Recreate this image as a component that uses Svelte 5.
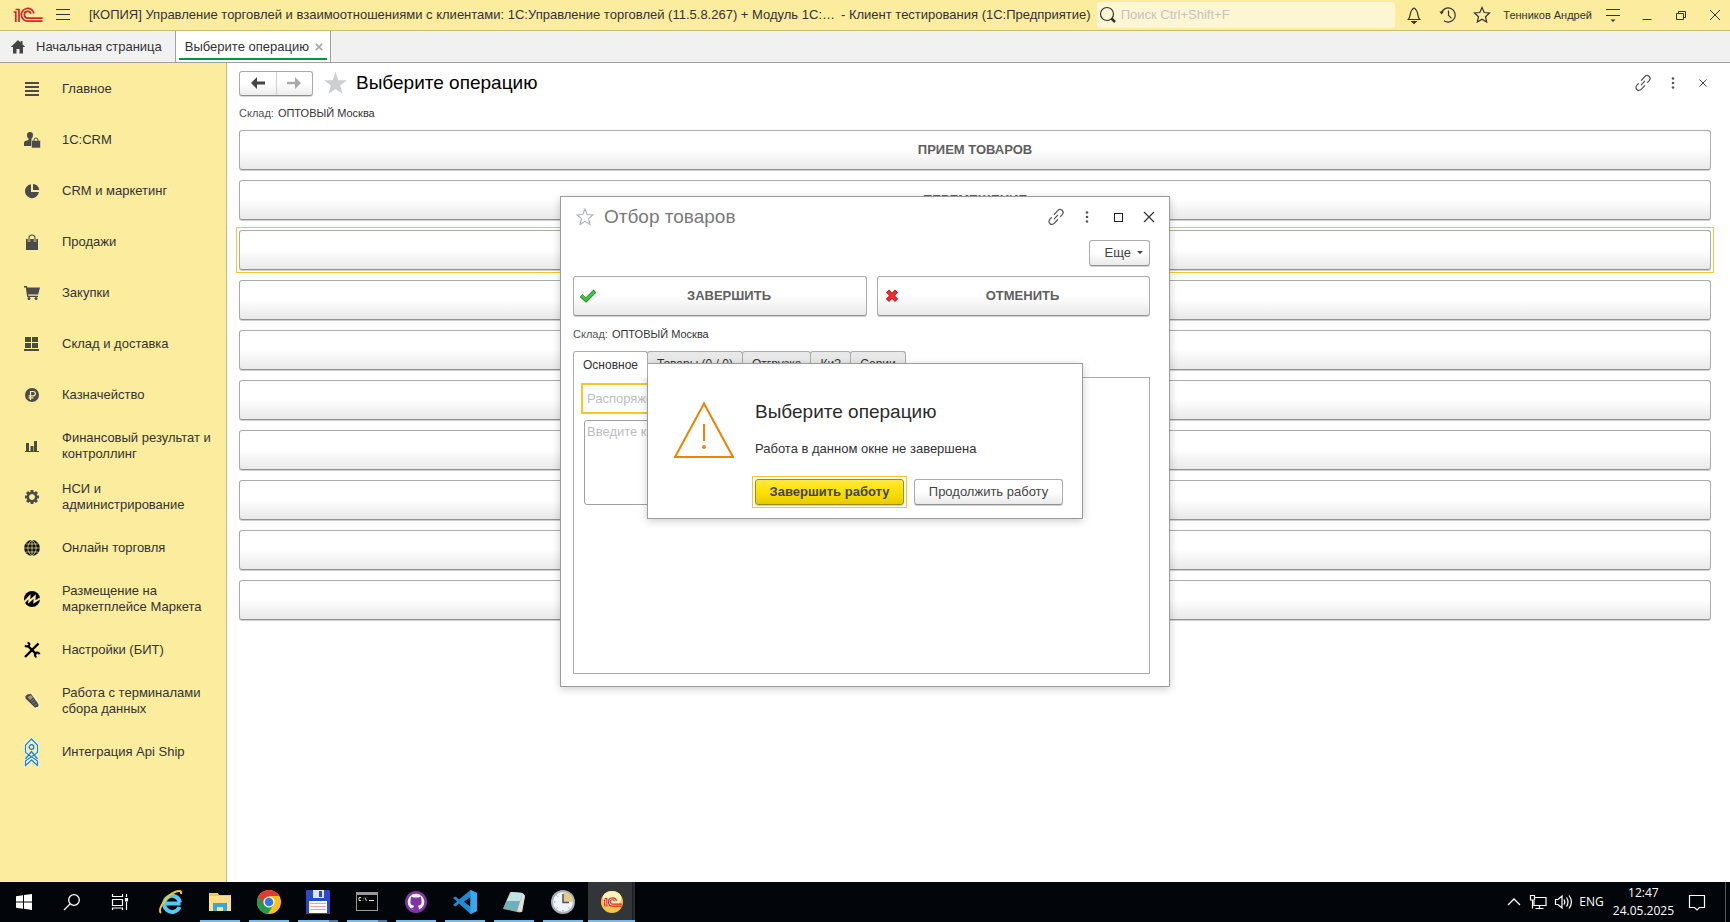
<script>
  const sections = [
    { icon: 'main', label: 'Главное' },
    { icon: 'crm', label: '1С:CRM' },
    { icon: 'pie', label: 'CRM и маркетинг' },
    { icon: 'bag', label: 'Продажи' },
    { icon: 'cart', label: 'Закупки' },
    { icon: 'store', label: 'Склад и доставка' },
    { icon: 'ruble', label: 'Казначейство' },
    { icon: 'chart', label: 'Финансовый результат и контроллинг' },
    { icon: 'gear', label: 'НСИ и администрирование' },
    { icon: 'globe', label: 'Онлайн торговля' },
    { icon: 'market', label: 'Размещение на маркетплейсе Маркета' },
    { icon: 'tools', label: 'Настройки (БИТ)' },
    { icon: 'terminal', label: 'Работа с терминалами сбора данных' },
    { icon: 'ship', label: 'Интеграция Api Ship' }
  ];
  const operations = ['ПРИЕМ ТОВАРОВ', 'ПЕРЕМЕЩЕНИЕ', '', '', '', '', '', '', '', ''];
  const tabs = ['Основное', 'Товары (0 / 0)', 'Отгрузка', 'КиЗ', 'Серии'];
  const apps = [
    { id: 'ie', name: 'Internet Explorer', state: '' },
    { id: 'explorer', name: 'Проводник', state: 'open' },
    { id: 'chrome', name: 'Chrome', state: 'open' },
    { id: 'floppy', name: 'Total Commander', state: 'open many' },
    { id: 'cmd', name: 'Командная строка', state: 'open many' },
    { id: 'github', name: 'GitHub', state: 'open' },
    { id: 'code', name: 'VS Code', state: 'open' },
    { id: 'note', name: 'Блокнот', state: 'open' },
    { id: 'clock', name: 'Планировщик', state: 'open' },
    { id: 'onec', name: '1С:Предприятие', state: 'open many current' }
  ];
  const spokes = [0, 45, 90, 135, 180, 225, 270, 315];
</script>

{#snippet link()}
  <svg class="i16" viewBox="0 0 16 16" fill="none" stroke="#555" stroke-width="1.2" stroke-linecap="round">
    <path d="M9 5h5a3 3 0 0 1 0 6h-2.500M7 11H2a3 3 0 0 1 0-6h2.500M5.500 8h5" transform="rotate(-48 8 8)" />
  </svg>
{/snippet}

{#snippet dots()}
  <svg class="i16" viewBox="0 0 16 16" fill="#555"><circle cx="8" cy="3.500" r="1.300" /><circle cx="8" cy="8" r="1.300" /><circle cx="8" cy="12.500" r="1.300" /></svg>
{/snippet}

{#snippet logo()}
  <g fill="none" stroke="#d8232a" stroke-width="1.700">
    <path d="M0.500 5H2.800V15M2.500 2.500H6V15" />
    <path d="M21 6.500A6.400 6.400 0 1 0 15 14.200H29.500" />
    <path d="M18 6.800A3.400 3.400 0 1 0 15 11.100H29.500" />
  </g>
{/snippet}

<div class="screen">
  <header class="titlebar">
    <svg class="logo" viewBox="0 0 30 16">{@render logo()}</svg>
    <button class="bare" aria-label="Меню"><svg class="i16" viewBox="0 0 16 16" stroke="#333" stroke-width="1"><path d="M1 2.500h14M1 7.500h14M1 12.500h14" /></svg></button>
    <h1 class="apptitle">
      <span>[КОПИЯ] Управление торговлей и взаимоотношениями с клиентами: 1С:Управление торговлей (11.5.8.267) + Модуль 1С:…</span>
      <span>- Клиент тестирования (1С:Предприятие)</span>
    </h1>
    <label class="search">
      <svg class="i18" viewBox="0 0 18 18" fill="none" stroke="#333"><circle cx="8" cy="8" r="6.500" stroke-width="1.200" /><path d="m12.500 12.500 3.500 3.500" stroke-width="2.500" /></svg>
      <input type="text" placeholder="Поиск Ctrl+Shift+F" aria-label="Поиск" />
    </label>
    <div class="tools">
      <button class="bare" aria-label="Уведомления"><svg class="i18" viewBox="0 0 18 18" fill="none" stroke="#333" stroke-width="1.200"><path d="M2.500 13.500h13M3.500 13.300C5.500 11 5 4.500 7.500 3.500c.3-1.800 2.700-1.800 3 0 2.500 1 2 7.500 4 9.800" /><path d="M7 15.500h4l-2 2z" fill="#333" /></svg></button>
      <button class="bare" aria-label="История"><svg class="i18" viewBox="0 0 18 18" fill="none" stroke="#333" stroke-width="1.200"><path d="M2.300 7A7.100 7.100 0 1 1 5 14.800M9.500 4.500v4.800l3 3" /><path d="M.500 5.500h4.500L2.500 8.500z" fill="#333" stroke="none" /></svg></button>
      <button class="bare" aria-label="Избранное"><svg class="i18" viewBox="0 0 18 18" fill="none" stroke="#333" stroke-width="1.200"><path d="m9 1.500 2.200 5 5.300.500-4 3.700 1.200 5.300L9 13.200 4.300 16l1.200-5.300-4-3.700 5.300-.500z" /></svg></button>
      <span class="user">Тенников Андрей</span>
      <button class="bare" aria-label="Настройки"><svg class="i16" viewBox="0 0 16 16" stroke="#333" fill="#333"><path d="M1 2.500h14M1 8.500h14" stroke-width="1.200" /><path d="M5.500 12.500h5L8 15z" stroke="none" /></svg></button>
      <button class="bare" aria-label="Свернуть"><svg class="i16" viewBox="0 0 16 16" stroke="#333"><path d="M3.500 12.500h9" /></svg></button>
      <button class="bare" aria-label="Развернуть"><svg class="i16" viewBox="0 0 16 16" stroke="#333" fill="none"><path d="M3.500 6.500h7v6h-7zM5.500 6.500v-2h7v6h-2" /></svg></button>
      <button class="bare" aria-label="Закрыть"><svg class="i16" viewBox="0 0 16 16" stroke="#333"><path d="m3 3 10 10M13 3 3 13" /></svg></button>
    </div>
  </header>

  <nav class="pages">
    <a href="#home" class="page home">
      <svg class="i16" viewBox="0 0 16 16" fill="#444"><path d="M8 1 .8 8H3v6.500h3.500V10h3v4.500H13V8h2.200L12.500 5.300V2h-2v1.400z" /></svg>
      Начальная страница
    </a>
    <a href="#operation" class="page active">
      Выберите операцию
      <svg class="tabclose" viewBox="0 0 8 8" stroke="#aaa" stroke-width="1.800"><path d="m.8.8 6.400 6.400M7.200.8.8 7.200" /></svg>
    </a>
  </nav>

  <div class="body">
    <nav class="sections">
      {#each sections as s}
        <a href="#{s.icon}" class="section">
          <svg class="sicon" viewBox="0 0 16 16" fill="#4a4a4a">
            {#if s.icon === 'main'}
              <path d="M1 1h14v2H1zM1 5h14v2H1zM1 9h14v2H1zM1 13h14v2H1z" />
            {:else if s.icon === 'crm'}
              <path d="M3 3a3 3 0 0 1 6 0c0 1.600-.6 3-1.500 3.600V8l1.500.6V14H0v-3.500c0-1.200 2-2 4.500-2.500V6.600C3.600 6 3 4.600 3 3z" />
              <path d="M7.500 16V8.500h9V16z" stroke="#fbec9e" stroke-width=".6" /><path d="M10 9.500V8a2 2 0 0 1 4 0v1.500" fill="none" stroke="#4a4a4a" />
            {:else if s.icon === 'pie'}
              <path d="M7 1.200A7 7 0 1 0 14.900 9H7z" /><path d="M9 .9V7h6.200A6.500 6.500 0 0 0 9 .9z" />
            {:else if s.icon === 'bag'}
              <path d="M2 5h12v11H2z" /><path d="M5 8V4a3 3 0 0 1 6 0v4" fill="none" stroke="#fbec9e" stroke-width="2.400" /><path d="M5 8V4a3 3 0 0 1 6 0v4" fill="none" stroke="#4a4a4a" stroke-width="1.100" />
            {:else if s.icon === 'cart'}
              <path d="M0 1h2.800l.7 1.500H16L14.200 9.500H4l.4 1.200h9.600V12H3.200L1.800 2.500H0z" /><circle cx="5" cy="13.500" r="1.500" /><circle cx="12" cy="13.500" r="1.500" />
            {:else if s.icon === 'store'}
              <path d="M1 1h6v5H1zM8 1h6v5H8zM1 7h6v5H1zM8 7h6v5H8zM0 13h15v2H0z" />
            {:else if s.icon === 'ruble'}
              <circle cx="8" cy="8" r="7" /><path d="M6.500 13V4.500h2.700a2.100 2.100 0 0 1 0 4.300H4.500M4.500 10.800h5" fill="none" stroke="#fbec9e" stroke-width="1.200" />
            {:else if s.icon === 'chart'}
              <path d="M2 5h3v8H2zM6.500 8h3v5h-3zM10 3h3v10h-3zM1 13h14v1H1z" />
            {:else if s.icon === 'gear'}
              {#each spokes as a}<path d="M6.500 1h3v4h-3z" transform="rotate({a} 8 8)" />{/each}
              <circle cx="8" cy="8" r="4" fill="none" stroke="#4a4a4a" stroke-width="2.600" /><circle cx="8" cy="8" r="2.700" fill="#fbec9e" />
            {:else if s.icon === 'globe'}
              <circle cx="8" cy="8" r="7.900" fill="#0d0d00" /><path d="M8 0v16M0 8h16M2 4h12M2 12h12M8 0C2.500 4 2.500 12 8 16M8 0c5.500 4 5.500 12 0 16" fill="none" stroke="#fbec9e" stroke-width=".7" />
            {:else if s.icon === 'market'}
              <circle cx="8" cy="8" r="8" fill="#000" /><path d="M0 11.500 5.500 5.500 5.200 10.500 10.800 5.500 10.300 11 16 7.500" fill="none" stroke="#fbec9e" stroke-width="1.900" />
            {:else if s.icon === 'tools'}
              <path d="M1 15 14.500 1.500" stroke="#000" stroke-width="2.400" /><path d="M4 4l8.500 8.500" stroke="#000" stroke-width="2.400" /><path d="M1 3.500A2.600 2.600 0 0 0 5.500 2 2.600 2.600 0 0 0 3.500.8M12.500 15A2.600 2.600 0 0 1 11 11.500a2.600 2.600 0 0 1 4.500.8" fill="none" stroke="#000" stroke-width="2" />
            {:else if s.icon === 'terminal'}
              <path d="M1 5 2 1.500 7.500 0 15.500 11v3L11 15.800z" fill="#fff" /><path d="M1.500 3.200 3 1.500 7 .7 14.500 11v2.500L11 14.800 1.500 5.500z" fill="#4d4740" /><path d="m3.500 4 3.500-2L9 4.500 6 7z" fill="#a89a78" /><path d="m7 8.500 3-2.500M8.500 10.500 11.500 8M10.500 12.500l3-2" stroke="#8d8678" />
            {:else}
              <g fill="none" stroke="#fff" stroke-width="2.600"><path d="M7.500-5 1.500 1.300V8.500L13.500 17v4.500L7.500 16l-6 5.500V17l12-8.500V1.300z" /></g>
              <g fill="none" stroke="#1583d8" stroke-width="1.300"><path d="M7.500-5 1.500 1.300V8.500L13.500 17v4.500L7.500 16l-6 5.500V17l12-8.500V1.300zM1.500 15 7.500 7.500l6 7.500" /><circle cx="7.500" cy="3" r="2.300" /></g>
            {/if}
          </svg>
          <span>{s.label}</span>
        </a>
      {/each}
    </nav>

    <main class="form">
      <div class="formhead">
        <div class="history">
          <button aria-label="Назад"><svg class="arrow" viewBox="0 0 14 12" fill="#444"><path d="M0 6 6 0v4.500h8v3H6V12z" /></svg></button>
          <button aria-label="Вперед"><svg class="arrow" viewBox="0 0 14 12" fill="#aaa"><path d="M14 6 8 0v4.800H0v2.400h8V12z" /></svg></button>
        </div>
        <svg class="bigstar" viewBox="0 0 24 24" fill="#ccced0"><path d="m12 0 3 8.500 9 .2-7.200 5.500L19.400 23 12 17.800 4.600 23l2.600-8.800L0 8.700l9-.2z" /></svg>
        <h2>Выберите операцию</h2>
        <div class="formtools">
          <button class="bare" aria-label="Ссылка">{@render link()}</button>
          <button class="bare" aria-label="Еще">{@render dots()}</button>
          <button class="bare" aria-label="Закрыть"><svg class="i16" viewBox="0 0 16 16" stroke="#444"><path d="m4.500 4.500 7 7M11.500 4.500l-7 7" /></svg></button>
        </div>
      </div>
      <p class="stock"><span>Склад:</span> ОПТОВЫЙ Москва</p>
      <div class="operations">
        {#each operations as op, n}
          <button class="btn big" class:focused={n === 2} aria-label={op || `Операция ${n + 1}`}>{op}</button>
        {/each}
      </div>
    </main>
  </div>

  <footer class="taskbar">
    <button class="sys" aria-label="Пуск"><svg class="i16" viewBox="0 0 16 16" fill="#fff"><path d="M0 2.200 7 1.200V7.500H0zM8 1l8-1v7.500H8zM0 8.500h7v6.300l-7-1zM8 8.500h8V16l-8-1.200z" /></svg></button>
    <button class="sys" aria-label="Поиск"><svg class="i18" viewBox="0 0 18 18" fill="none" stroke="#fff" stroke-width="1.300"><circle cx="11" cy="7" r="5.300" /><path d="m7 11-6 6" /></svg></button>
    <button class="sys" aria-label="Представление задач"><svg class="i18" viewBox="0 0 18 18" fill="none" stroke="#fff" stroke-width="1.200"><path d="M1.500 1v2.500h10V1M1.500 6.500h10v6h-10zM1.500 17v-2h10v2M15.500 1v3M15.500 9v8" /><path d="M14.500 5.500h2v2.500h-2z" fill="#fff" /></svg></button>
    {#each apps as app}
      <button class="app {app.state}" aria-label={app.name}>
        <svg class="i24" viewBox="0 0 24 24">
          {#if app.id === 'ie'}
            <path d="M5 13.500h16.500M20.500 17A8 8 0 1 1 21 12.500" fill="none" stroke="#55c8f4" stroke-width="4" /><path d="M2 23C-2 20 7 6 16 2c4-1.800 7-1.500 6 2" fill="none" stroke="#f5c52a" stroke-width="2" />
          {:else if app.id === 'explorer'}
            <path d="M1 3h9l1 2h12v16H1z" fill="#f3c755" /><path d="M1 6h22v15H1z" fill="#ffe08a" /><path d="M5 21v-8h14v8h-4v-4H9v4z" fill="#3aa7dc" />
          {:else if app.id === 'chrome'}
            <circle cx="12" cy="12" r="12" fill="#fbc116" /><path d="M12 12 1.600 6A12 12 0 0 0 11 24l5.500-9.500z" fill="#229a48" /><path d="M1.600 6A12 12 0 0 1 22.400 6H12v6L7 15z" fill="#e33b2e" /><circle cx="12" cy="12" r="5.600" fill="#fff" /><circle cx="12" cy="12" r="4.300" fill="#3478e5" />
          {:else if app.id === 'floppy'}
            <path d="M0 0h23l1 1v23H0z" fill="#2b48c8" /><path d="M7 0h11v8H7z" fill="#dfe3ee" /><path d="M13 1h3v6h-3z" fill="#2b48c8" /><path d="M3 11h18v12H3z" fill="#fff" /><path d="M4 13.500h16M4 16.500h16M4 19.500h16" stroke="#f0a0a0" />
          {:else if app.id === 'cmd'}
            <path d="M1 2h22v19H1z" fill="#999" /><path d="M2 5h20v15H2z" fill="#050505" /><path d="M6 7.500H4v3h2M8 8v.5M8 10v.5M10 7.500l1.500 3.500M14 10.500h5" fill="none" stroke="#ddd" />
          {:else if app.id === 'github'}
            <circle cx="12" cy="12" r="11" fill="#7f35a9" /><circle cx="12" cy="12" r="8.300" fill="#fff" /><path d="M7 6.500 9.500 7.500h5L17 6.500l.3 3c1.200 4-.8 6-3.300 6.300l.8 1.700V22H9.200v-2.500l-2.700-1.500 2.800-.5.700-1.700C7.500 15.500 5.500 13.500 6.700 9.500z" fill="#7f35a9" />
          {:else if app.id === 'code'}
            <path d="M17.500 0 24 3v18l-6.500 3L6 13.500 2.500 16.500 0 15l4-3.500L0 8l2.500-1.500L6 9.500zM17.500 7 11 11.700l6.500 5z" fill="#1f8ad2" fill-rule="evenodd" /><path d="M17.500 0 24 3v18l-6.500 3z" fill="#39a8ee" />
          {:else if app.id === 'note'}
            <path d="m8 2 13 1 2 3-3 16-3 .5L1 19z" fill="#b98b3a" /><path d="m9 2 11.500 1L15 21.500 1 18.500z" fill="#6fb0ba" /><path d="m9 2 11.500 1L18 11 4.500 11z" fill="#bfe3e6" /><path d="m20.500 3 2.500 3-3 16-5-.5z" fill="#dedede" />
          {:else if app.id === 'clock'}
            <circle cx="12" cy="12" r="12" fill="#aab1b8" /><circle cx="12" cy="12" r="10" fill="#eef4fa" /><path d="M12 12V2a10 10 0 0 1 10 10z" fill="#e8c98a" /><path d="M12 4v8.500h6" fill="none" stroke="#456" stroke-width="1.500" /><path d="M12 20v1.500M3 12h1.500M5.500 5.500l1 1M5.500 18.500l1-1M18.500 18.500l-1-1" stroke="#789" />
          {:else}
            <circle cx="12" cy="12" r="11" fill="#f2c44a" /><ellipse cx="12" cy="8.500" rx="9.500" ry="7.500" fill="#fdf1b8" /><g transform="translate(3 7) scale(.64)" stroke-width="2">{@render logo()}</g>
          {/if}
        </svg>
      </button>
    {/each}
    <div class="tray">
      <svg class="i16" viewBox="0 0 16 16" fill="none" stroke="#fff" stroke-width="1.300"><path d="m2 11 6-6 6 6" /></svg>
      <svg class="i18" viewBox="0 0 18 18" fill="none" stroke="#fff" stroke-width="1.200"><path d="M6 4.500h11v8H5V8M10.500 12.500v3M6.500 15.500h8M1.500 2.500h4V7h-4zM3.500 7v8.500" /></svg>
      <svg class="i18" viewBox="0 0 18 18" fill="none" stroke="#fff" stroke-width="1.200"><path d="M1.500 6.500H4l4-3.500v12l-4-3.500H1.500zM10 6.500c1 1.500 1 3.500 0 5M12.500 4.500c2 3 2 6 0 9M15 2.500c3 4 3 9 0 13" /></svg>
      <span>ENG</span>
    </div>
    <div class="time"><span>12:47</span><span>24.05.2025</span></div>
    <svg class="i18 action" viewBox="0 0 18 18" fill="none" stroke="#fff" stroke-width="1.200"><path d="M1.500 2.500h15v12h-5L9 17l-2.500-2.500h-5z" /></svg>
    <span class="peek"></span>
  </footer>

  <div class="layer">
    <section class="window" aria-label="Отбор товаров">
      <div class="winhead">
        <svg class="i18" viewBox="0 0 18 18" fill="none" stroke="#aeb2b8" stroke-width="1.100"><path d="m9 1 2.200 5.500 5.800.500-4.500 3.700 1.500 5.800L9 13.400 4 16.500l1.500-5.800L1 7l5.800-.500z" /></svg>
        <h2>Отбор товаров</h2>
        <div class="wintools">
          <button class="bare" aria-label="Ссылка">{@render link()}</button>
          <button class="bare" aria-label="Меню окна">{@render dots()}</button>
          <button class="bare" aria-label="Развернуть"><svg class="i16" viewBox="0 0 16 16" fill="none" stroke="#222"><path d="M4 4.500h8M4 12.500h8M4.500 4v9M12.500 4v9" /></svg></button>
          <button class="bare" aria-label="Закрыть"><svg class="i16" viewBox="0 0 16 16" stroke="#333" stroke-width="1.200"><path d="m3 3 10 10M13 3 3 13" /></svg></button>
        </div>
      </div>
      <div class="more"><button class="btn small">Еще <i></i></button></div>
      <div class="decide">
        <button class="btn big"><svg class="i18" viewBox="0 0 18 18"><path d="m1 8.500 5 4.500L15 4" fill="none" stroke="#26912b" stroke-width="4" /><path d="m1.500 8.500 4.500 4L14.500 4.500" fill="none" stroke="#43c34a" stroke-width="2.400" /></svg><span>ЗАВЕРШИТЬ</span></button>
        <button class="btn big"><svg class="i18" viewBox="0 0 18 18"><path d="m3.500 4 9 9.500M12.500 4l-9 9.500" stroke="#b31217" stroke-width="4.200" /><path d="m4 4.500 8 8.500M12 4.500 4 13" stroke="#fa2a2d" stroke-width="2.600" /></svg><span>ОТМЕНИТЬ</span></button>
      </div>
      <p class="stock"><span>Склад:</span> ОПТОВЫЙ Москва</p>
      <div class="tabs" role="tablist">
        {#each tabs as t, n}
          <button role="tab" aria-selected={n === 0} class:on={n === 0}>{t}</button>
        {/each}
      </div>
      <div class="panel">
        <input type="text" class="order" placeholder="Распоряжение" aria-label="Распоряжение" />
        <textarea class="comment" placeholder="Введите комментарий" aria-label="Комментарий"></textarea>
      </div>
    </section>
  </div>

  <div class="layer">
    <section class="dialog" role="alertdialog" aria-label="Выберите операцию">
      <svg class="warn" viewBox="0 0 62 58" fill="none" stroke="#f08200" stroke-width="2"><path d="M31 2.500 60 56H2z" /><path d="M31 23v17" /><circle cx="31" cy="46" r="2" fill="#f08200" stroke="none" /></svg>
      <div class="message">
        <h3>Выберите операцию</h3>
        <p>Работа в данном окне не завершена</p>
        <div class="answers">
          <button class="btn small primary focused">Завершить работу</button>
          <button class="btn small">Продолжить работу</button>
        </div>
      </div>
    </section>
  </div>
</div>

<style>
  :global(body) { margin: 0; }
  .screen { position: relative; display: flex; flex-direction: column; min-height: 100vh; background: #fff; color: #333; font: 13px/16px "Liberation Sans", Arial, sans-serif; }
  .screen * { box-sizing: border-box; }
  h1, h2, h3, p { margin: 0; font-weight: normal; }
  button, input, textarea { font: inherit; color: inherit; margin: 0; }
  a { color: inherit; text-decoration: none; }
  svg { display: block; flex: none; overflow: visible; }
  .i16 { width: 16px; height: 16px; }
  .i18 { width: 18px; height: 18px; }
  .i24 { width: 24px; height: 24px; }
  .bare { display: grid; place-items: center; padding: 0; border: 0; background: none; }

  .titlebar { display: flex; align-items: center; height: 31px; padding: 0 6px 0 13px; background: #fbec9e; border-bottom: 1px solid #c9bc73; }
  .logo { width: 30px; height: 16px; margin-right: 12px; }
  .apptitle { display: flex; flex: none; gap: 6px; margin-left: 18px; font-size: 13px; white-space: nowrap; }
  .search { display: flex; flex: 1; align-items: center; gap: 4px; height: 26px; margin-left: 6px; padding-left: 2px; background: #fdf6d5; border-radius: 3px; }
  .search input { flex: 1; min-width: 0; padding: 0; border: 0; outline: 0; background: none; }
  .search input::placeholder { color: #c6c3bd; }
  .tools { display: flex; align-items: center; gap: 16px; margin-left: 10px; }
  .user { margin: 0 -4px; font-size: 11px; white-space: nowrap; }
  .tools .i16 { margin: 0 1px; }

  .pages { display: flex; height: 32px; background: #f1f1f1; border-bottom: 1px solid #a0a0a0; }
  .page { display: flex; align-items: center; border-right: 1px solid #a0a0a0; white-space: nowrap; }
  .home { gap: 10px; padding: 0 13px 0 10px; }
  .active { gap: 6px; padding: 0 7px 0 9px; background: linear-gradient(#009646, #009646) 3px 27px / calc(100% - 6px) 2px no-repeat #fff; }
  .tabclose { width: 8px; height: 8px; }

  .body { display: flex; flex: 1; }
  .sections { width: 227px; flex: none; background: #fbec9e; border-right: 1px solid #c5bb7e; }
  .section { display: flex; align-items: center; gap: 22px; height: 51px; padding: 0 12px 0 24px; }
  .sicon { width: 16px; height: 16px; }

  .form { flex: 1; padding: 7px 19px 0 12px; }
  .formhead { display: flex; align-items: center; height: 26px; }
  .history { display: flex; width: 74px; height: 25px; border: 1px solid #a8a8a8; border-bottom-color: #8c8c8c; border-radius: 3px; background: linear-gradient(#fff 50%, #ececec); box-shadow: 0 1px #d6d6d6; }
  .history button { display: grid; flex: 1; place-items: center; padding: 0; border: 0; background: none; }
  .history button + button { border-left: 1px solid #d0d0d0; }
  .arrow { width: 14px; height: 12px; }
  .bigstar { width: 23px; height: 23px; margin-left: 11px; }
  .formhead h2 { margin-left: 9px; font-size: 19px; line-height: 24px; color: #000; }
  .formtools { display: flex; gap: 14px; margin-left: auto; }
  .stock { display: flex; gap: 4px; font-size: 11px; line-height: 14px; }
  .stock span { color: #555; }
  .form .stock { margin-top: 10px; }
  .operations { display: grid; gap: 10px; margin-top: 10px; }

  .btn { position: relative; border: 1px solid #ababab; border-bottom-color: #929292; border-radius: 3px; background: linear-gradient(#fff 50%, #e9e9e9); box-shadow: 0 1px #cfcfcf; color: #444; padding: 0; }
  .big { height: 40px; font-weight: bold; color: #606060; }
  .focused::after { content: ""; position: absolute; inset: -4px; border: 1px solid #f5c72d; }
  .small { height: 26px; }

  .layer { position: absolute; inset: 0 0 40px; display: grid; place-items: center; pointer-events: none; }
  .layer > section { pointer-events: auto; }
  .window { width: 610px; padding: 6px 19px 12px 12px; background: #fff; border: 1px solid #9c9c9c; box-shadow: 0 2px 8px #0003; }
  .winhead { display: flex; align-items: center; height: 28px; padding-left: 3px; }
  .winhead h2 { margin-left: 10px; font-size: 19px; line-height: 24px; color: #7a7a7a; }
  .wintools { display: flex; gap: 15px; margin-left: auto; margin-right: -7px; }
  .more { display: flex; justify-content: flex-end; margin-top: 9px; }
  .more .btn { display: flex; align-items: center; justify-content: flex-end; gap: 6px; width: 61px; padding-right: 6px; }
  .more i { border: 3px solid transparent; border-top-color: #444; border-bottom: 0; }
  .decide { display: grid; grid-template-columns: 294fr 273fr; gap: 10px; margin-top: 10px; }
  .decide .btn { display: flex; align-items: center; padding: 0 6px; }
  .decide span { flex: 1; text-align: center; }
  .window .stock { margin-top: 11px; }
  .tabs { display: flex; margin-top: 10px; }
  .tabs button { height: 26px; padding: 0 9px; margin-right: -1px; border: 1px solid #ababab; border-bottom: 0; border-radius: 3px 3px 0 0; background: #e8e8e8; font-size: 12px; white-space: nowrap; }
  .tabs .on { height: 27px; margin-bottom: -1px; background: #fff; z-index: 1; }
  .panel { display: flex; flex-direction: column; gap: 6px; height: 297px; padding: 5px 150px 10px 7px; border: 1px solid #ababab; }
  .order { height: 31px; padding: 0 4px; border: 2px solid #f8c822; outline: 0; }
  .comment { height: 85px; margin-left: 3px; padding: 3px 2px; border: 1px solid #a0a0a0; border-radius: 3px; resize: none; }
  .order::placeholder, .comment::placeholder { color: #bdbdc1; }

  .dialog { display: flex; width: 436px; padding: 36px 19px 13px 25px; background: #fff; border: 1px solid #9c9c9c; box-shadow: 0 2px 8px #0003; }
  .warn { width: 62px; height: 58px; margin-top: 1px; }
  .message { flex: 1; margin-left: 20px; }
  .dialog h3 { font-size: 19px; line-height: 24px; color: #2b2b2b; }
  .dialog p { margin-top: 17px; }
  .answers { display: grid; grid-template-columns: 1fr 1fr; gap: 10px; margin-top: 22px; }
  .primary { border-color: #9e8c10; background: linear-gradient(#ffe93e, #ffe000 50%, #e6cc00); font-weight: bold; }

  .taskbar { display: flex; align-items: center; height: 40px; background: #02050a; color: #fff; font: 12px/18px "Open Sans", "Noto Sans", sans-serif; }
  .sys { display: grid; place-items: center; width: 48px; height: 40px; padding: 0; border: 0; background: none; }
  .app { position: relative; display: grid; place-items: center; width: 49px; height: 40px; padding: 0; border: 0; background: none; }
  .sys + .app { margin-left: 2px; }
  .open::after { content: ""; position: absolute; inset: auto 4px 0 5px; height: 2px; background: #76b9ed; }
  .many::after { background: linear-gradient(90deg, #76b9ed 31px, #4a79a3 31px); }
  .current { background: linear-gradient(90deg, transparent 1px, #333639 1px 45px, #1a1d20 45px 46px, #2a2d30 46px 48px, transparent 48px); }
  .current::after { inset: auto 1px 0 1px; background: #76b9ed; }
  .tray { display: flex; align-items: center; gap: 7px; margin-left: auto; }
  .time { display: grid; justify-items: center; margin-left: 9px; }
  .action { margin: 0 19px 0 14px; }
  .peek { width: 5px; height: 40px; border-left: 1px solid #555a60; }
</style>
